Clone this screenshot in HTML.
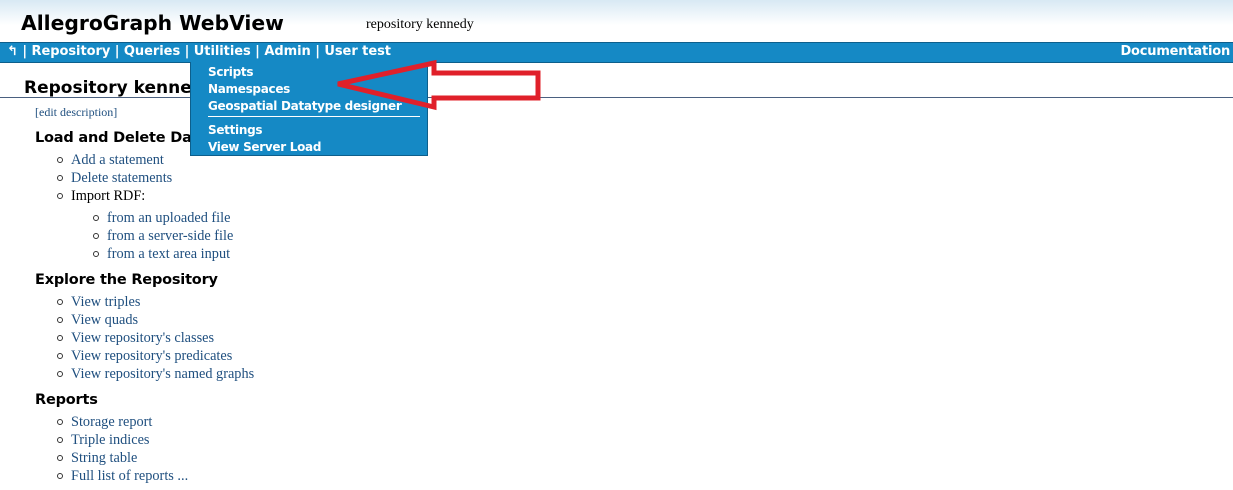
<!DOCTYPE html>
<html><head><style>
body{margin:0;width:1233px;height:490px;overflow:hidden;background:#fff;position:relative;font-family:"Liberation Serif",serif}
.hdr{position:absolute;left:0;top:0;width:1233px;height:42px;background:linear-gradient(#d8e9f4,#ffffff 60%)}
.title{position:absolute;left:21px;top:11px;font:bold 20.3px "DejaVu Sans",sans-serif;color:#000;letter-spacing:0px}
.repo{position:absolute;left:366px;top:17px;font-size:14px}
.bar{position:absolute;left:0;top:42px;width:1233px;height:19px;background:#1589c5;border-top:1px solid #0d5f8c;border-bottom:1px solid #0d5f8c}
.nav{position:absolute;left:7px;top:44px;font:bold 13px "DejaVu Sans",sans-serif;color:#fff;white-space:nowrap;letter-spacing:-0.05px}
.doc{position:absolute;right:3px;top:44px;font:bold 13px "DejaVu Sans",sans-serif;color:#fff;letter-spacing:-0.2px}
.menu{position:absolute;left:190px;top:62px;width:236px;height:93px;background:#1589c5;border:1px solid #0d5f8c;border-top:none;font:bold 12px "DejaVu Sans",sans-serif;color:#fff;letter-spacing:-0.3px}
.menu div{position:absolute;left:17px}
.h1{position:absolute;left:24px;top:78px;font:bold 17px "DejaVu Sans",sans-serif}
.rule{position:absolute;left:0;top:97px;width:1233px;height:1px;background:#4a6080}
.h2{position:absolute;left:35px;font:bold 14.5px "DejaVu Sans",sans-serif;letter-spacing:-0.2px}
.t{position:absolute;font-size:14.3px;color:#1f4f7f;white-space:nowrap}
.k{color:#000}
.b{position:absolute;width:4px;height:4px;border:1px solid #333;border-radius:50%}
</style></head><body>
<div class="hdr"></div>
<div class="title">AllegroGraph WebView</div>
<div class="repo">repository kennedy</div>
<div class="h1">Repository kennedy</div>
<div class="rule"></div>
<div class="bar"></div>
<div class="nav">&#8624; | Repository | Queries | Utilities | Admin | User test</div>
<div class="doc">Documentation</div>
<div class="t" style="left:35px;top:105px;font-size:12px">[edit description]</div>
<div class="h2" style="top:130px">Load and Delete Data</div>
<div class="menu">
<div style="top:3px">Scripts</div>
<div style="top:20px">Namespaces</div>
<div style="top:37px">Geospatial Datatype designer</div>
<div style="top:54px;left:17px;width:212px;height:1px;background:#fff"></div>
<div style="top:61px">Settings</div>
<div style="top:78px">View Server Load</div>
</div>
<svg style="position:absolute;left:0;top:0" width="1233" height="490"><polygon points="338,84 434,63 434,73 538,73 538,98 434,98 434,107" fill="none" stroke="#e0202a" stroke-width="5" stroke-linejoin="miter"/></svg>

<div class="b" style="left:57px;top:157px"></div><div class="t" style="left:71px;top:152px">Add a statement</div>
<div class="b" style="left:57px;top:175px"></div><div class="t" style="left:71px;top:170px">Delete statements</div>
<div class="b" style="left:57px;top:193px"></div><div class="t k" style="left:71px;top:188px">Import RDF:</div>
<div class="b" style="left:93px;top:215px"></div><div class="t" style="left:107px;top:210px">from an uploaded file</div>
<div class="b" style="left:93px;top:233px"></div><div class="t" style="left:107px;top:228px">from a server-side file</div>
<div class="b" style="left:93px;top:251px"></div><div class="t" style="left:107px;top:246px">from a text area input</div>

<div class="h2" style="top:272px">Explore the Repository</div>
<div class="b" style="left:57px;top:299px"></div><div class="t" style="left:71px;top:294px">View triples</div>
<div class="b" style="left:57px;top:317px"></div><div class="t" style="left:71px;top:312px">View quads</div>
<div class="b" style="left:57px;top:335px"></div><div class="t" style="left:71px;top:330px">View repository's classes</div>
<div class="b" style="left:57px;top:353px"></div><div class="t" style="left:71px;top:348px">View repository's predicates</div>
<div class="b" style="left:57px;top:371px"></div><div class="t" style="left:71px;top:366px">View repository's named graphs</div>

<div class="h2" style="top:392px">Reports</div>
<div class="b" style="left:57px;top:419px"></div><div class="t" style="left:71px;top:414px">Storage report</div>
<div class="b" style="left:57px;top:437px"></div><div class="t" style="left:71px;top:432px">Triple indices</div>
<div class="b" style="left:57px;top:455px"></div><div class="t" style="left:71px;top:450px">String table</div>
<div class="b" style="left:57px;top:473px"></div><div class="t" style="left:71px;top:468px">Full list of reports ...</div>
</body></html>
